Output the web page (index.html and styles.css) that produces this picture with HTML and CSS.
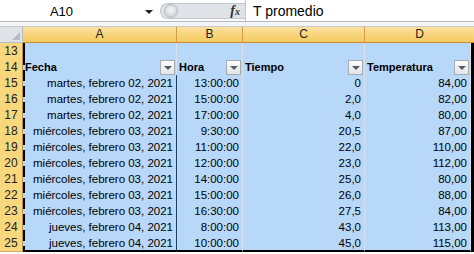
FILE: index.html
```html
<!DOCTYPE html>
<html lang="es">
<head>
    <meta charset="UTF-8">
    <title>Hoja de cálculo</title>
    <link rel="stylesheet" href="styles.css">
</head>
<body>
    <div class="formula-bar">
        <div class="name-box"><span class="name">A10</span><span class="name-arrow"></span></div>
        <div class="fx-area"><span class="knob"></span><span class="fx">f<span class="fx-x">x</span></span></div>
        <div class="formula-input">T promedio</div>
    </div>
    <div class="bar-gap"></div>

    <div class="sheet">
        <div class="row head-row">
            <div class="corner"></div>
            <div class="col-head">A</div>
            <div class="col-head">B</div>
            <div class="col-head">C</div>
            <div class="col-head last">D</div>
        </div>

        <div class="row">
            <div class="row-head">13</div>
            <div class="cell a first"></div>
            <div class="cell"></div>
            <div class="cell"></div>
            <div class="cell"></div>
            <div class="mq"></div>
        </div>

        <div class="row">
            <div class="row-head">14</div>
            <div class="cell a th"><span>Fecha</span><span class="filter"></span></div>
            <div class="cell th"><span>Hora</span><span class="filter"></span></div>
            <div class="cell th"><span>Tiempo</span><span class="filter"></span></div>
            <div class="cell th"><span>Temperatura</span><span class="filter"></span></div>
            <div class="mq"></div>
        </div>

        <div class="row">
            <div class="row-head">15</div>
            <div class="cell a">martes, febrero 02, 2021</div>
            <div class="cell">13:00:00</div>
            <div class="cell">0</div>
            <div class="cell">84,00</div>
            <div class="mq"></div>
        </div>
        <div class="row">
            <div class="row-head">16</div>
            <div class="cell a">martes, febrero 02, 2021</div>
            <div class="cell">15:00:00</div>
            <div class="cell">2,0</div>
            <div class="cell">82,00</div>
            <div class="mq"></div>
        </div>
        <div class="row">
            <div class="row-head">17</div>
            <div class="cell a">martes, febrero 02, 2021</div>
            <div class="cell">17:00:00</div>
            <div class="cell">4,0</div>
            <div class="cell">80,00</div>
            <div class="mq"></div>
        </div>
        <div class="row">
            <div class="row-head">18</div>
            <div class="cell a">miércoles, febrero 03, 2021</div>
            <div class="cell">9:30:00</div>
            <div class="cell">20,5</div>
            <div class="cell">87,00</div>
            <div class="mq"></div>
        </div>
        <div class="row">
            <div class="row-head">19</div>
            <div class="cell a">miércoles, febrero 03, 2021</div>
            <div class="cell">11:00:00</div>
            <div class="cell">22,0</div>
            <div class="cell">110,00</div>
            <div class="mq"></div>
        </div>
        <div class="row">
            <div class="row-head">20</div>
            <div class="cell a">miércoles, febrero 03, 2021</div>
            <div class="cell">12:00:00</div>
            <div class="cell">23,0</div>
            <div class="cell">112,00</div>
            <div class="mq"></div>
        </div>
        <div class="row">
            <div class="row-head">21</div>
            <div class="cell a">miércoles, febrero 03, 2021</div>
            <div class="cell">14:00:00</div>
            <div class="cell">25,0</div>
            <div class="cell">80,00</div>
            <div class="mq"></div>
        </div>
        <div class="row">
            <div class="row-head">22</div>
            <div class="cell a">miércoles, febrero 03, 2021</div>
            <div class="cell">15:00:00</div>
            <div class="cell">26,0</div>
            <div class="cell">88,00</div>
            <div class="mq"></div>
        </div>
        <div class="row">
            <div class="row-head">23</div>
            <div class="cell a">miércoles, febrero 03, 2021</div>
            <div class="cell">16:30:00</div>
            <div class="cell">27,5</div>
            <div class="cell">84,00</div>
            <div class="mq"></div>
        </div>
        <div class="row">
            <div class="row-head">24</div>
            <div class="cell a">jueves, febrero 04, 2021</div>
            <div class="cell">8:00:00</div>
            <div class="cell">43,0</div>
            <div class="cell">113,00</div>
            <div class="mq"></div>
        </div>
        <div class="row last-row">
            <div class="row-head">25</div>
            <div class="cell a">jueves, febrero 04, 2021</div>
            <div class="cell">10:00:00</div>
            <div class="cell">45,0</div>
            <div class="cell">115,00</div>
            <div class="mq"></div>
        </div>
    </div>
</body>
</html>
```

FILE: styles.css
```css
body {
    margin: 0;
    width: 474px;
    height: 254px;
    overflow: hidden;
    background: #fff;
    font-family: "Liberation Sans", Arial, sans-serif;
    color: #000;
}

/* barra de fórmulas */
.formula-bar {
    display: flex;
    height: 21px;
    border-bottom: 1px solid #b4b9c0;
    background: #fff;
}
.name-box {
    width: 160px;
    display: flex;
    align-items: center;
}
.name {
    flex: 1;
    text-align: center;
    font-size: 13px;
    padding-right: 22px;
    padding-top: 1px;
}
.name-arrow {
    width: 0;
    height: 0;
    border-left: 4px solid transparent;
    border-right: 4px solid transparent;
    border-top: 4px solid #222;
    margin-right: 7px;
    margin-top: 2px;
}
.fx-area {
    width: 85px;
    height: 16px;
    margin-top: 3px;
    box-sizing: border-box;
    background: #dfe2e7;
    border: 1px solid #c2c7ce;
    border-right: none;
    border-radius: 9px 0 0 9px;
    display: flex;
    align-items: center;
    justify-content: space-between;
    padding: 0 5px 0 3px;
}
.knob {
    width: 12px;
    height: 12px;
    border-radius: 50%;
    background: radial-gradient(circle at 50% 40%, #f7f8f9, #c2c5ca);
    border: 1px solid #b7bbc1;
}
.fx {
    font-family: "Liberation Serif", serif;
    font-style: italic;
    font-weight: bold;
    font-size: 14px;
    color: #333;
}
.fx-x {
    font-size: 10px;
}
.formula-input {
    flex: 1;
    border-left: 1px solid #c2c7ce;
    font-size: 14px;
    padding: 3px 0 0 7px;
}
.bar-gap {
    height: 4px;
    background: #f4f5f7;
    border-bottom: 1px solid #c6cad0;
}

/* hoja */
.row {
    display: grid;
    grid-template-columns: 23px 154px 66px 122px 106px 3px;
    height: 16px;
}
.corner {
    position: relative;
    background: #dfe3e8;
    border-right: 1px solid #b9bec5;
    border-bottom: 1px solid #b9bec5;
}
.corner::after {
    content: "";
    position: absolute;
    right: 2px;
    bottom: 2px;
    width: 8px;
    height: 8px;
    background: #b8bcc2;
    clip-path: polygon(100% 0, 100% 100%, 0 100%);
}
.col-head {
    background: linear-gradient(#fbe1a0, #f9d681 45%, #f5ca5e);
    border-right: 1px solid #d49c45;
    border-bottom: 1px solid #c88c37;
    font-size: 12px;
    line-height: 15px;
    text-align: center;
    color: #222;
}
.col-head.last {
    grid-column: span 2;
    border-right: none;
}
.row-head {
    background: #f9d77d;
    border-right: 1px solid #c4913e;
    border-bottom: 1px solid #d6ab5c;
    font-size: 12px;
    line-height: 16px;
    text-align: center;
    color: #222;
}

.cell {
    box-sizing: border-box;
    background: #b8d8fa;
    border-right: 1px solid #d8dfe8;
    border-bottom: 1px solid #d8dfe8;
    font-size: 11.5px;
    line-height: 16px;
    text-align: right;
    padding-right: 3px;
    white-space: nowrap;
    overflow: hidden;
}
.cell.a {
    border-left: 2px dashed #000;
    border-right: 1px solid #1f3d5f;
    border-bottom: 1px solid #1f3d5f;
}
.cell.a.first {
    border-left: 2px solid #000;
    border-right-color: #d8dfe8;
    border-bottom-color: #d8dfe8;
}
.cell.th {
    display: flex;
    align-items: center;
    justify-content: space-between;
    text-align: left;
    font-weight: bold;
    font-size: 11px;
    padding: 0 1px 0 2px;
    border-bottom: 1px solid #1f3d5f;
}
.cell.a.th {
    padding-left: 0;
    border-right-color: #d8dfe8;
}
.filter {
    position: relative;
    width: 15px;
    height: 15px;
    box-sizing: border-box;
    border: 1px solid #a7acb3;
    background: linear-gradient(#fdfdfd, #e2e4e7);
}
.filter::after {
    content: "";
    position: absolute;
    left: 3px;
    top: 5px;
    border-left: 4px solid transparent;
    border-right: 4px solid transparent;
    border-top: 4px solid #555a60;
}
.mq {
    background: #000;
}
.last-row .cell {
    border-bottom: 2px solid #000;
}
```
